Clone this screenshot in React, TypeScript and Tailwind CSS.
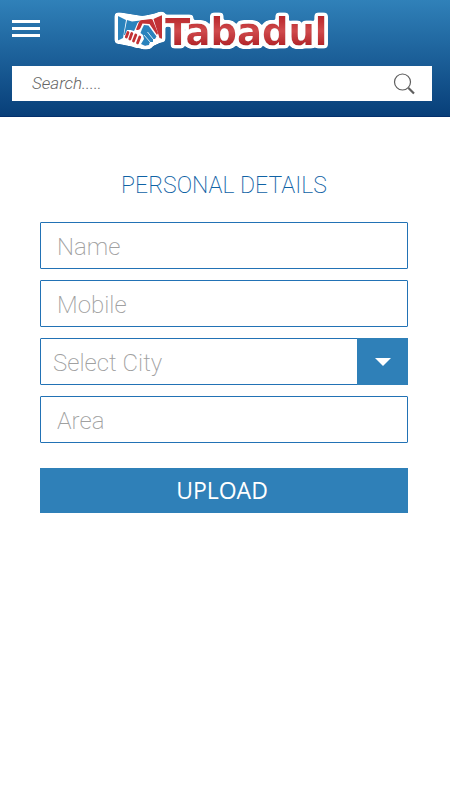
import { useState } from "react";

const CITIES = ["Riyadh", "Jeddah", "Dammam", "Mecca"];

const field =
  "block h-[47px] w-full rounded-[1px] border border-[#2272b5] bg-white px-4 pt-0.5 text-2xl font-extralight text-gray-700 outline-none placeholder:text-[#a0a0a0]";

function Logo() {
  return (
    <svg viewBox="0 -4 222 56" className="h-14 w-[222px]" role="img" aria-label="Tabadul">
      <defs>
        <filter id="outline" x="-5%" y="-20%" width="110%" height="140%">
          <feMorphology in="SourceAlpha" operator="dilate" radius="2" />
          <feGaussianBlur stdDeviation="1.4" />
          <feComponentTransfer result="edge">
            <feFuncA type="linear" slope="8" intercept="-0.8" />
          </feComponentTransfer>
          <feFlood floodColor="#ffffff" />
          <feComposite in2="edge" operator="in" result="white" />
          <feMerge>
            <feMergeNode in="white" />
            <feMergeNode in="SourceGraphic" />
          </feMerge>
        </filter>
        <linearGradient id="red" gradientUnits="userSpaceOnUse" x1="0" y1="13" x2="0" y2="41">
          <stop offset="0" stopColor="#b9282c" />
          <stop offset="0.5" stopColor="#d04a4d" />
          <stop offset="1" stopColor="#b3262a" />
        </linearGradient>
      </defs>
      <g filter="url(#outline)">
        <path d="M4 12 L29 16 L48 12 L47 34 L30 41 L5 36 Z" fill="#fff" />
        {/* left cuff and hand */}
        <path d="M4 12 L12 16 L9 34 L4 36.5 Z" fill="#2c83bd" />
        <path d="M13 16 L18 17.5 L26.5 16.5 L23.5 19 L21 25 L20 27 L16.5 26 L13 26 L11 31 L10 31 Z" fill="#2c83bd" />
        {/* right cuff and hand */}
        <path d="M22 25.5 L25 18 Q26 15.5 29 16 L37 15 L38.5 15.5 L44 29 L43 31 L35.5 20 L28.5 19.5 L26.5 24 Q25 27 22 25.5 Z" fill="#c23034" />
        <path d="M39.5 15 L48 11 L48 35 L45.5 34 Z" fill="#c23034" />
        {/* fingers */}
        <path d="M28 25 L30 21 L34.5 21.5 L42.5 32.5 L41 35 L39 35 L39 38 L36 38 L35 41 L31 42 L27 40 L30 35 L29 31 L26.5 29 Z" fill="#2c83bd" />
        <path d="M33.5 28 L39 35 M30 31 L36 38" stroke="#fff" strokeWidth="0.8" />
        <path d="M14 28.5 L12.3 33 M17.8 29.5 L15.8 35 M21.8 31 L19.5 37 M25.8 33 L23.5 39" stroke="#c23034" strokeWidth="2.8" strokeLinecap="round" />
        <text
          x="51"
          y="41"
          fontSize="37"
          fontWeight="bold"
          fill="url(#red)"
          className="font-['DejaVu_Sans',sans-serif]"
        >
          Tabadul
        </text>
      </g>
    </svg>
  );
}

export default function App() {
  const [query, setQuery] = useState("");
  const [city, setCity] = useState("");

  return (
    <div className="min-h-screen bg-white font-[Roboto,sans-serif]">
      <header className="border-b border-[#032f6c] bg-linear-to-b from-[#3081b9] to-[#083f79] px-3 pb-[15px]">
        <div className="grid h-[66px] grid-cols-[28px_1fr_28px] items-center pb-2.5">
          <button type="button" aria-label="Menu" className="flex flex-col gap-1">
            <span className="h-[3px] w-7 bg-white" />
            <span className="h-[3px] w-7 bg-white" />
            <span className="h-[3px] w-7 bg-white" />
          </button>
          <div className="flex justify-center">
            <Logo />
          </div>
        </div>
        <form role="search" className="mr-1.5 flex h-[35px] items-center bg-white pr-4" onSubmit={e => e.preventDefault()}>
          <input
            type="search"
            aria-label="Search"
            placeholder="Search....."
            value={query}
            onChange={e => setQuery(e.target.value)}
            className="h-full min-w-0 flex-1 pb-0.5 pl-5 text-[17px] font-light italic text-gray-700 outline-none placeholder:text-[#666666]"
          />
          <button type="submit" aria-label="Search">
            <svg viewBox="0 0 24 24" className="size-6" fill="none" stroke="#5e5e5e">
              <circle cx="10.5" cy="10" r="8" strokeWidth="1.2" />
              <path d="M16.5 16 L22 21.5" strokeWidth="2.2" />
            </svg>
          </button>
        </form>
      </header>

      <main className="pt-[53px] pr-[42px] pl-10">
        <h1 className="text-center text-[23px] leading-8 font-extralight text-[#0f62a5]">PERSONAL DETAILS</h1>
        <form className="mt-5" onSubmit={e => e.preventDefault()}>
          <div className="space-y-[11px]">
            <input className={field} aria-label="Name" placeholder="Name" />
            <input className={field} aria-label="Mobile" placeholder="Mobile" type="tel" />
            <div className="relative">
              <select
                aria-label="Select City"
                value={city}
                onChange={e => setCity(e.target.value)}
                className="block h-[47px] w-full appearance-none rounded-[1px] border border-[#2272b5] bg-white pt-0.5 pl-3 text-2xl font-extralight text-[#a0a0a0] outline-none"
              >
                <option value="">Select City</option>
                {CITIES.map(c => (
                  <option key={c} value={c}>{c}</option>
                ))}
              </select>
              <span className="pointer-events-none absolute inset-y-0 right-0 flex w-[51px] items-center justify-center bg-[#2f80b8]">
                <svg viewBox="0 0 16 8" className="h-2 w-4" fill="#fff">
                  <path d="M0 0H16L8 8Z" />
                </svg>
              </span>
            </div>
            <input className={field} aria-label="Area" placeholder="Area" />
          </div>
          <button
            type="submit"
            className="mt-[25px] h-[45px] w-full bg-[#2f80b8] pr-1 font-['Open_Sans',sans-serif] text-[23px] text-white"
          >
            UPLOAD
          </button>
        </form>
      </main>
    </div>
  );
}
